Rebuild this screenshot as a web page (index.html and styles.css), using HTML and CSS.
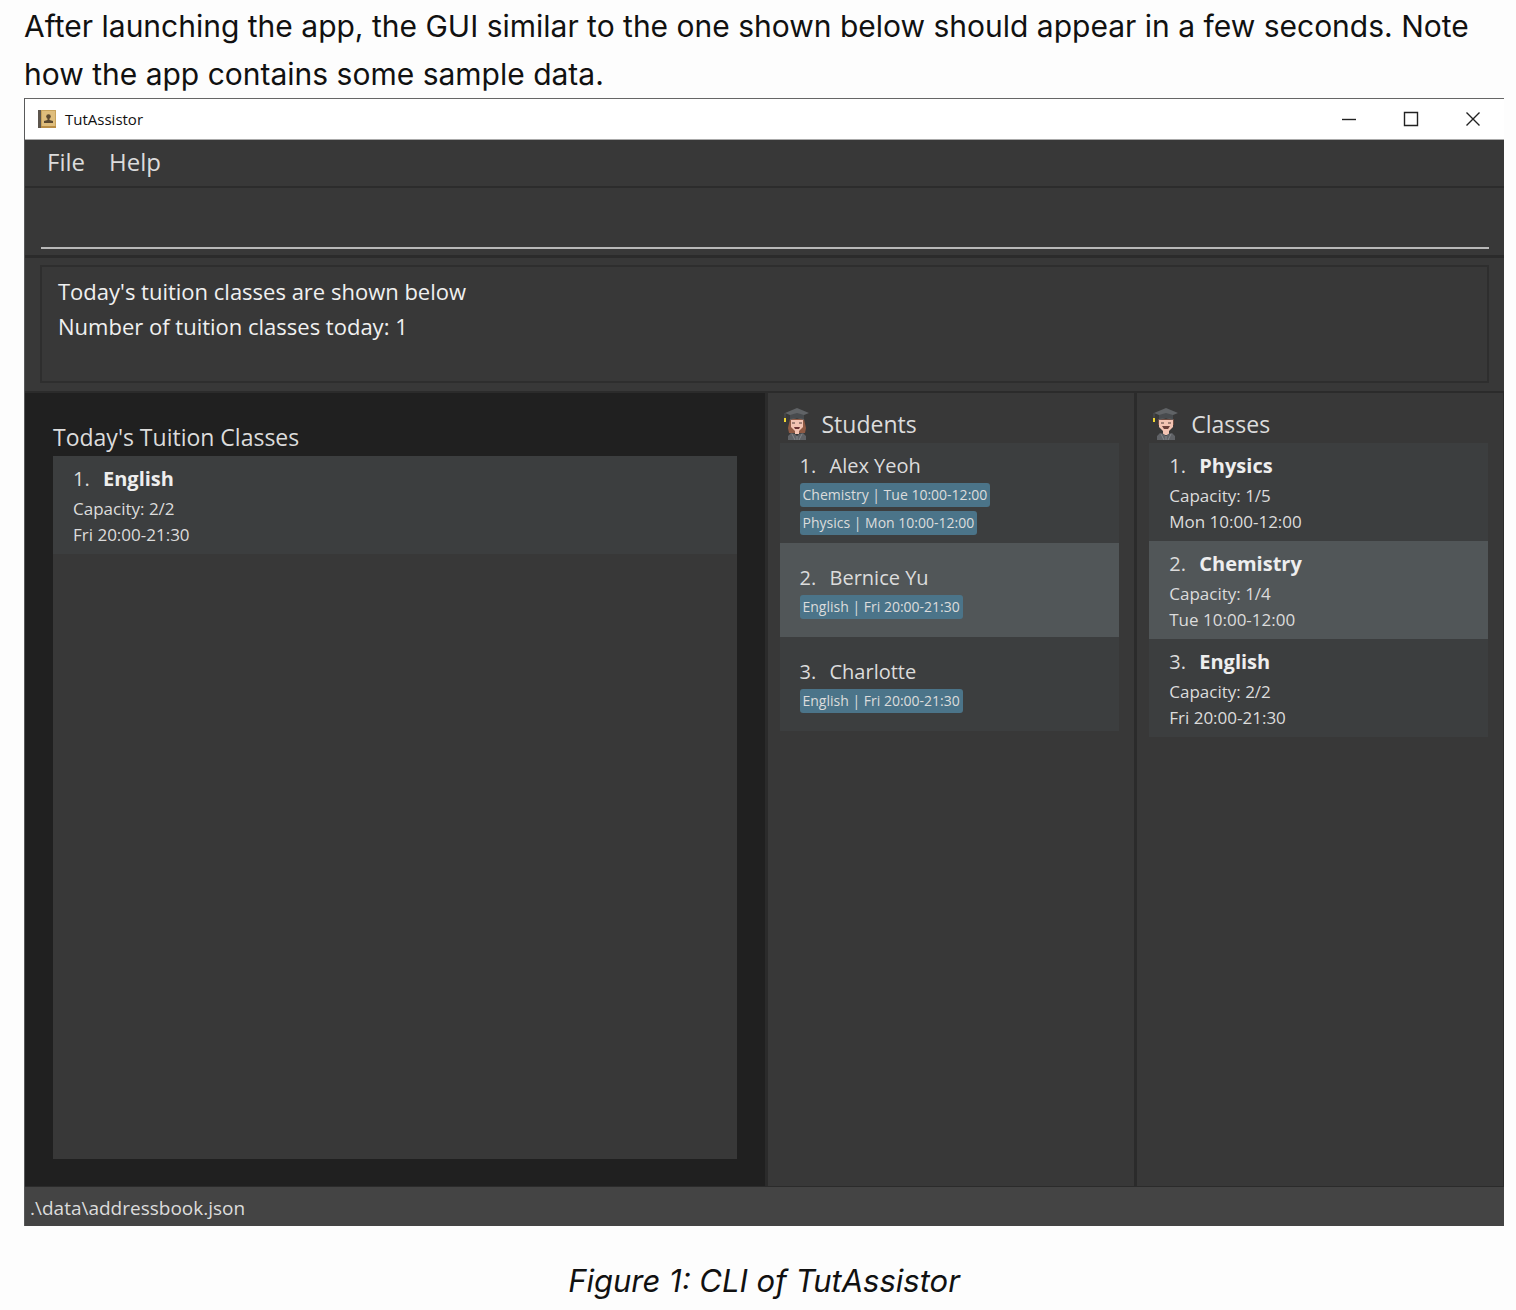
FILE: index.html
```html
<!DOCTYPE html>
<html lang="en">
<head>
<meta charset="utf-8">
<title>TutAssistor</title>
<link rel="stylesheet" href="styles.css">
</head>
<body>
<p class="intro">After launching the app, the GUI similar to the one shown below should appear in a few seconds. Note how the app contains some sample data.</p>
<figure class="figure">
  <div class="window">
    <header class="titlebar">
      <svg class="app-icon" viewBox="0 0 20 20" aria-hidden="true">
        <rect x="1" y="1" width="18" height="18" fill="#c9a35c"/>
        <rect x="5" y="2" width="13" height="15" fill="#dfbd7c"/>
        <rect x="1" y="1" width="3" height="18" fill="#5c554d"/>
        <rect x="4" y="17" width="15" height="2" fill="#b98d45"/>
        <circle cx="11.500" cy="7.500" r="2.300" fill="#5c4930"/>
        <path d="M10.500 9h2v2l3.500 1v2H7v-2l3.500-1z" fill="#5c4930"/>
      </svg>
      <span class="app-name">TutAssistor</span>
      <button class="win-btn" type="button" aria-label="Minimize"><svg viewBox="0 0 16 16"><path d="M1 8.500h14"/></svg></button>
      <button class="win-btn" type="button" aria-label="Maximize"><svg viewBox="0 0 16 16"><path d="M1.500 1.500h13v13h-13z"/></svg></button>
      <button class="win-btn" type="button" aria-label="Close"><svg viewBox="0 0 16 16"><path d="M1.500 1.500l13 13M14.500 1.500l-13 13"/></svg></button>
    </header>
    <nav class="menubar">
      <button class="menu" type="button">File</button>
      <button class="menu" type="button">Help</button>
    </nav>
    <div class="command"><input class="command-input" type="text" aria-label="Command"></div>
    <div class="result">
      <div class="result-box">Today's tuition classes are shown below<br>Number of tuition classes today: 1</div>
    </div>
    <main class="panels">
      <section class="today">
        <h2 class="heading">Today's Tuition Classes</h2>
        <ol class="list today-list">
          <li class="card"><h3 class="name"><span class="num">1.</span><b>English</b></h3><p class="line">Capacity: 2/2</p><p class="line">Fri 20:00-21:30</p></li>
        </ol>
      </section>
      <section class="column">
        <h2 class="heading">
          <svg class="grad" viewBox="0 0 28 34" aria-hidden="true">
            <path d="M7 12h14l2 9-1 5H6l-1-5z" fill="#8f5a44"/>
            <path d="M8 13h12v7l-4 4v3h-4v-3l-4-4z" fill="#f3c3b2"/>
            <path d="M9 16h3M16 16h3" stroke="#503c38" stroke-width="1"/>
            <path d="M11 20h6l-1 2h-4z" fill="#6b3333"/>
            <path d="M5 33v-4l3-3 4 1 2 2 2-2 4-1 3 3v4z" fill="#606266"/>
            <path d="M9 27l3 6M19 27l-3 6M14 29v4" stroke="#828488"/>
            <path d="M14 1l12 5-5 2v5l-7-2-7 2V8L2 6z" fill="#606366"/>
            <path d="M7 8l7-2 7 2v4l-7-1-7 1z" fill="#484b4e"/>
            <path d="M2 6v5" stroke="#505356"/><path d="M1 11h2v4H1z" fill="#f1d832"/>
          </svg>Students</h2>
        <ol class="list">
          <li class="card tall"><h3 class="name"><span class="num">1.</span>Alex Yeoh</h3><span class="tag">Chemistry | Tue 10:00-12:00</span><span class="tag">Physics | Mon 10:00-12:00</span></li>
          <li class="card student even"><h3 class="name"><span class="num">2.</span>Bernice Yu</h3><span class="tag">English | Fri 20:00-21:30</span></li>
          <li class="card student"><h3 class="name"><span class="num">3.</span>Charlotte</h3><span class="tag">English | Fri 20:00-21:30</span></li>
        </ol>
      </section>
      <section class="column">
        <h2 class="heading">
          <svg class="grad" viewBox="0 0 28 34" aria-hidden="true">
            <path d="M6 12h16v6H6z" fill="#6d4b40"/>
            <path d="M7 13h14v7l-4 4v4h-6v-4l-4-4z" fill="#f3c3b2"/>
            <path d="M9 16h3M16 16h3" stroke="#503c38" stroke-width="1"/>
            <path d="M10 19h8l-2 3h-4z" fill="#6b3f39"/>
            <path d="M5 33v-4l3-3 4 1 2 2 2-2 4-1 3 3v4z" fill="#606266"/>
            <path d="M9 27l3 6M19 27l-3 6M14 29v4" stroke="#828488"/>
            <path d="M14 1l12 5-5 2v5l-7-2-7 2V8L2 6z" fill="#606366"/>
            <path d="M7 8l7-2 7 2v4l-7-1-7 1z" fill="#484b4e"/>
            <path d="M2 6v5" stroke="#505356"/><path d="M1 11h2v4H1z" fill="#f1d832"/>
          </svg>Classes</h2>
        <ol class="list">
          <li class="card"><h3 class="name"><span class="num">1.</span><b>Physics</b></h3><p class="line">Capacity: 1/5</p><p class="line">Mon 10:00-12:00</p></li>
          <li class="card even"><h3 class="name"><span class="num">2.</span><b>Chemistry</b></h3><p class="line">Capacity: 1/4</p><p class="line">Tue 10:00-12:00</p></li>
          <li class="card"><h3 class="name"><span class="num">3.</span><b>English</b></h3><p class="line">Capacity: 2/2</p><p class="line">Fri 20:00-21:30</p></li>
        </ol>
      </section>
    </main>
    <footer class="status">.\data\addressbook.json</footer>
  </div>
  <figcaption class="caption">Figure 1: CLI of TutAssistor</figcaption>
</figure>
</body>
</html>
```
FILE: styles.css
```css
* { box-sizing: border-box; }
body {
  margin: 0;
  padding: 2px 12px 0 24px;
  min-height: 100vh;
  display: flex;
  flex-direction: column;
  background: #fdfdfd;
  color: #111;
  font-family: Inter, sans-serif;
}
h2, h3, p, ol, figure { margin: 0; padding: 0; }
ol { list-style: none; }
button { border: 0; padding: 0; background: none; font: inherit; color: inherit; }
.intro { font-size: 30px; line-height: 48px; }
.figure { flex: 1; display: flex; flex-direction: column; }
.window {
  flex: 1;
  display: flex;
  flex-direction: column;
  border-left: 1px solid #58595a;
  border-top: 1px solid #666;
  background: #383838;
  color: #dcdcdc;
  font-family: "Open Sans", sans-serif;
}
.titlebar {
  display: flex;
  align-items: center;
  height: 41px;
  padding-left: 12px;
  background: #fff;
  color: #111;
  border-bottom: 1px solid #aaa;
}
.app-icon { width: 20px; height: 20px; margin-right: 8px; }
.app-name { flex: 1; font-size: 15px; }
.win-btn { width: 62px; height: 40px; display: grid; place-items: center; }
.win-btn svg { width: 16px; height: 16px; fill: none; stroke: #222; stroke-width: 1.400; }
.menubar {
  display: flex;
  gap: 24px;
  height: 48px;
  padding-left: 22px;
  font-size: 24px;
  border-bottom: 2px solid #2c2c2c;
}
.menu { line-height: 44px; height: 44px; }
.command { height: 70px; padding: 8px 15px 8px 16px; border-bottom: 3px solid #2b2b2b; }
.command-input {
  display: block;
  width: 100%;
  height: 53px;
  border: 0;
  border-bottom: 2px solid #b8b8b8;
  outline: 0;
  background: transparent;
  color: #fff;
  font: 22px "Open Sans", sans-serif;
}
.result { padding: 7px 15px 8px; border-bottom: 2px solid #2b2b2b; }
.result-box {
  height: 118px;
  padding: 7px 16px;
  border: 2px solid #2e2e2e;
  color: #f0f0f0;
  font-size: 22px;
  line-height: 35px;
}
.panels { flex: 1; display: grid; grid-template-columns: 2fr 1fr 1fr; border-bottom: 1px solid #2b2b2b; }
.today { display: flex; flex-direction: column; padding: 27px 28px; background: #202020; }
.today-list { flex: 1; background: #383838; }
.column { padding: 14px 15px 14px 12px; border-left: 3px solid #2b2b2b; }
.column:last-child { border-right: 1px solid #2b2b2b; }
.heading {
  display: flex;
  height: 36px;
  font-size: 23px;
  line-height: 34px;
  font-weight: 400;
}
.grad { width: 28px; height: 34px; margin: 0 11px 0 3px; }
.card { height: 98px; padding: 7px 20px; background: #3c3e3f; }
.tall { height: 100px; }
.student { height: 94px; padding-top: 19px; }
.even { background: #515658; }
.name { display: flex; height: 33px; font-size: 20px; line-height: 32px; font-weight: 400; }
.name b { font-weight: 700; color: #eee; }
.num { width: 30px; }
.line { font-size: 17px; line-height: 26px; }
.tag {
  display: block;
  width: fit-content;
  height: 24px;
  margin-bottom: 4px;
  padding: 0 3px;
  border-radius: 3px;
  background: #4b7489;
  font-size: 14px;
  line-height: 24px;
}
.status { height: 39px; padding-left: 5px; background: #444; font-size: 19px; line-height: 42px; }
.caption { height: 84px; padding-top: 31px; font-size: 31px; line-height: 48px; font-style: italic; text-align: center; }
```
